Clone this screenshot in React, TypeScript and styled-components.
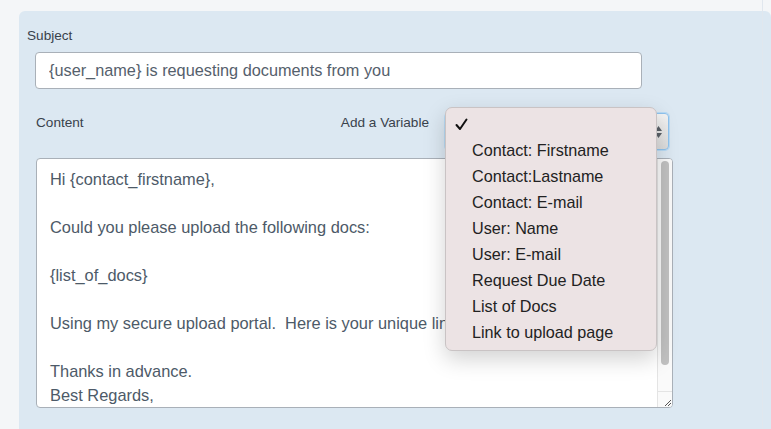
import styled, { createGlobalStyle } from "styled-components";

const GlobalStyle = createGlobalStyle`
  html, body {
    margin: 0;
    padding: 0;
    background: #f4f6f8;
    font-family: "Liberation Sans", Arial, sans-serif;
    overflow: hidden;
  }
`;

const Page = styled.div`
  position: relative;
  width: 771px;
  height: 429px;
  padding: 11px 0 0 19px;
  box-sizing: border-box;
  &::after {
    content: "";
    position: absolute;
    top: 0;
    bottom: 0;
    left: 762px;
    width: 1px;
    background: #e1e7ee;
  }
`;

const Panel = styled.section`
  background: #dce8f2;
  border-radius: 6px 6px 0 0;
  height: 430px;
  padding: 17px 0 0 8px;
  box-sizing: border-box;
`;

const Label = styled.label`
  display: block;
  font-size: 13.6px;
  color: #39424c;
  line-height: 16px;
`;

const SubjectInput = styled.input`
  display: block;
  margin: 8px 0 0 8px;
  width: 607px;
  height: 37px;
  box-sizing: border-box;
  border: 1px solid #a9b0b8;
  border-radius: 4px;
  background: #fff;
  padding: 0 13px;
  font-family: inherit;
  font-size: 16.3px;
  color: #55606c;
  outline: none;
`;

const ContentRow = styled.div`
  display: flex;
  align-items: flex-start;
  margin: 24px 0 0 9px;
  width: 633px;
  height: 37px;
  position: relative;
`;

const RowLabel = styled(Label)<{ $gap?: number }>`
  margin-top: 2px;
  margin-right: ${(p) => p.$gap ?? 0}px;
`;

const Spacer = styled.div`
  flex: 1;
`;

const FakeSelect = styled.div`
  width: 224px;
  height: 37px;
  box-sizing: border-box;
  border: 1px solid #8fc3ee;
  border-radius: 4px;
  background: linear-gradient(#f4f4f4, #dcdcdc);
  box-shadow: 0 0 0 1px #b9dbf5;
  display: flex;
  align-items: center;
  justify-content: flex-end;
  padding-right: 6px;
`;

const Menu = styled.ul`
  position: absolute;
  left: 409px;
  top: -6px;
  width: 212px;
  height: 244px;
  box-sizing: border-box;
  margin: 0;
  padding: 3px 0 0 0;
  list-style: none;
  background: #ece3e4;
  border: 1px solid #c9c3c4;
  border-radius: 7px;
  box-shadow: 0 8px 22px rgba(0, 0, 0, 0.18);
  z-index: 5;
`;

const MenuItem = styled.li`
  height: 26px;
  line-height: 26px;
  font-size: 16.2px;
  color: #222;
  padding-left: 26px;
  position: relative;
  svg {
    position: absolute;
    left: 9px;
    top: 7px;
  }
`;

const TextBox = styled.div`
  display: flex;
  margin: 8px 0 0 9px;
  width: 637px;
  height: 250px;
  box-sizing: border-box;
  border: 1px solid #a9b0b8;
  border-radius: 4px;
  background: #fff;
  overflow: hidden;
`;

const TextArea = styled.textarea`
  flex: 1;
  border: none;
  background: transparent;
  padding: 8px 13px;
  font-family: inherit;
  font-size: 16.4px;
  line-height: 24px;
  color: #4d5a68;
  resize: none;
  outline: none;
  white-space: pre-wrap;
  overflow: hidden;
`;

const ScrollColumn = styled.div`
  width: 15px;
  display: flex;
  flex-direction: column;
  background: #fafafa;
  border-left: 1px solid #e4e4e4;
  box-sizing: border-box;
`;

const Thumb = styled.div<{ $size: number }>`
  height: ${(p) => p.$size}px;
  margin: 2px 3px 0 3px;
  border-radius: 4px;
  background: #c1c1c1;
`;

const Resizer = styled.div`
  margin-top: auto;
  height: 15px;
  border-top: 1px solid #e4e4e4;
  display: flex;
  align-items: flex-end;
  justify-content: flex-end;
`;

const variables = [
  "Contact: Firstname",
  "Contact:Lastname",
  "Contact: E-mail",
  "User: Name",
  "User: E-mail",
  "Request Due Date",
  "List of Docs",
  "Link to upload page",
];

const body = `Hi {contact_firstname},

Could you please upload the following docs:

{list_of_docs}

Using my secure upload portal.  Here is your unique link: {upload_link}

Thanks in advance.
Best Regards,
{user_name}`;

export default function App() {
  return (
    <Page>
      <GlobalStyle />
      <Panel>
        <Label>Subject</Label>
        <SubjectInput defaultValue="{user_name} is requesting documents from you" />
        <ContentRow>
          <RowLabel>Content</RowLabel>
          <Spacer />
          <RowLabel $gap={16}>Add a Variable</RowLabel>
          <FakeSelect>
            <svg width="7" height="14" viewBox="0 0 7 14">
              <path d="M3.5 1 L7 6 H0 Z" fill="#5b6168" />
              <path d="M3.5 13 L7 8 H0 Z" fill="#5b6168" />
            </svg>
          </FakeSelect>
          <Menu>
            <MenuItem>
              <svg width="13" height="13" viewBox="0 0 13 13">
                <path
                  d="M1.5 7 L5 11 L11.5 1.5"
                  fill="none"
                  stroke="#111"
                  strokeWidth="2"
                  strokeLinecap="round"
                  strokeLinejoin="round"
                />
              </svg>
            </MenuItem>
            {variables.map((v) => (
              <MenuItem key={v}>{v}</MenuItem>
            ))}
          </Menu>
        </ContentRow>
        <TextBox>
          <TextArea defaultValue={body} />
          <ScrollColumn>
            <Thumb $size={204} />
            <Resizer>
              <svg width="10" height="10" viewBox="0 0 10 10">
                <path d="M9 3 L3 9 M9 6 L6 9" stroke="#555" strokeWidth="1" />
              </svg>
            </Resizer>
          </ScrollColumn>
        </TextBox>
      </Panel>
    </Page>
  );
}
